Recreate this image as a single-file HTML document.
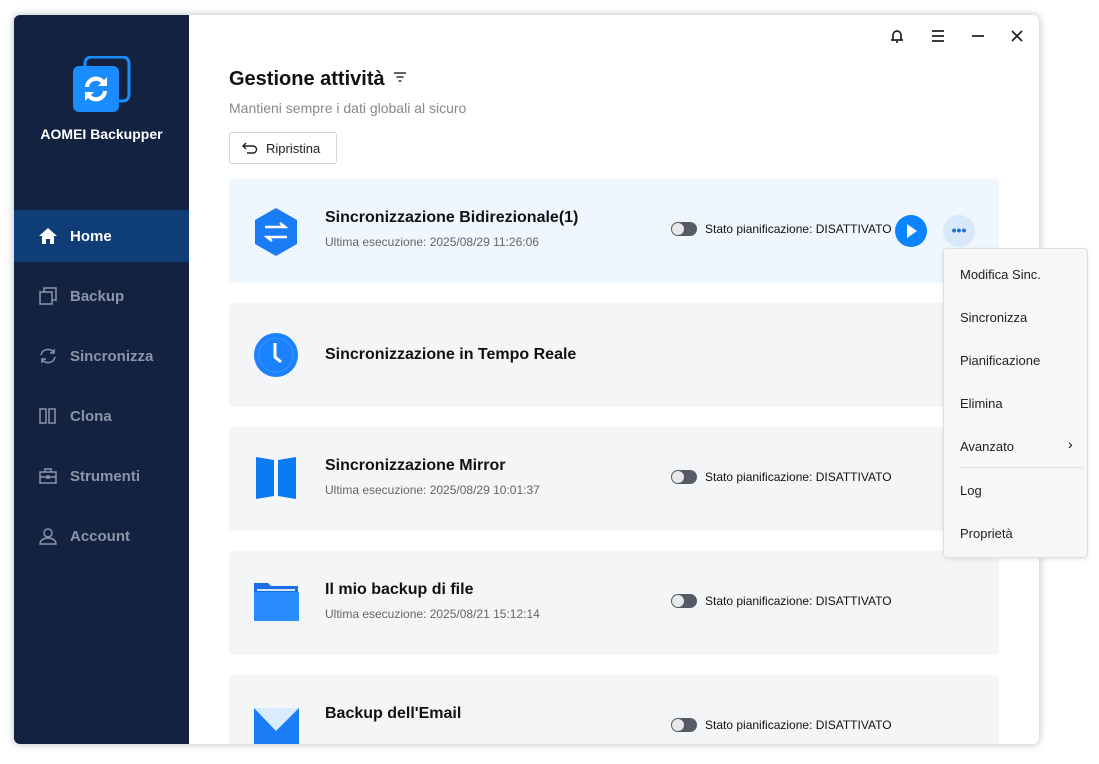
<!DOCTYPE html>
<html><head><meta charset="utf-8"><style>
*{margin:0;padding:0;box-sizing:border-box}
body{width:1099px;height:764px;background:#fff;font-family:"Liberation Sans",sans-serif;position:relative;overflow:hidden}
.win{position:absolute;left:14px;top:15px;width:1025px;height:729px;background:#fff;border-radius:6px;overflow:hidden;box-shadow:0 0 8px rgba(90,100,130,.45)}
.side{position:absolute;left:0;top:0;width:175px;height:729px;background:#142242}
.logo{position:absolute;left:58px;top:41px}
.brand{position:absolute;left:0;width:175px;top:111px;text-align:center;color:#fff;font-weight:bold;font-size:14px}
.nav{position:absolute;left:0;width:175px;height:52px;display:flex;align-items:center;color:#8b94a8;font-size:15px;font-weight:bold}
.nav svg{margin-left:24px;margin-right:12px}
.nav.act{background:#0f3d78;color:#fff}
.main{position:absolute;left:175px;top:0;right:0;bottom:0}
h1{position:absolute;left:40px;top:53px;font-size:20px;font-weight:bold;color:#111}
.sub{position:absolute;left:40px;top:85px;font-size:14px;color:#888}
.btn{position:absolute;left:40px;top:117px;width:108px;height:32px;border:1px solid #d4d6da;border-radius:3px;font-size:13px;color:#222;display:flex;align-items:center;padding-left:12px}
.card{position:absolute;left:40px;width:770px;height:104px;background:#f4f5f7;border-radius:4px}
.card.sel{background:#eff6fd}
.ic{position:absolute;left:24px;top:28px}
.t{position:absolute;left:96px;top:30px;font-size:16px;font-weight:bold;color:#111}
.d{position:absolute;left:96px;top:56px;font-size:12px;color:#666}
.st{position:absolute;left:442px;top:43px;font-size:12px;color:#111;display:flex;align-items:center}
.tg{width:26px;height:14px;border-radius:7px;background:#555b66;position:relative;margin-right:8px}
.tg:after{content:"";position:absolute;left:1px;top:1px;width:12px;height:12px;border-radius:6px;background:#e8e8ea}
.menu{position:absolute;left:943px;top:248px;width:145px;height:310px;background:#f6f7f9;border:1px solid #dcdee2;border-radius:4px;box-shadow:0 2px 6px rgba(0,0,0,.08)}
.mi{position:absolute;left:16px;font-size:13px;color:#222}
</style></head><body>
<div class="win">
<div class="side">
<svg class="logo" width="60" height="58" viewBox="0 0 60 58"><rect x="13" y="1" width="44" height="44" rx="6" fill="none" stroke="#1a8cff" stroke-width="3"/><rect x="1" y="10" width="46" height="46" rx="6" fill="#1a8cff"/><path d="M13 31a11 11 0 0 1 19-7l3-3v9h-9l3-3a7 7 0 0 0-12 4z" fill="#fff"/><path d="M35 35a11 11 0 0 1-19 7l-3 3v-9h9l-3 3a7 7 0 0 0 12-4z" fill="#fff"/></svg>
<div class="brand">AOMEI Backupper</div>
<div class="nav act" style="top:195px"><svg width="20" height="18" viewBox="0 0 20 18"><path d="M10 1 1 9h3v8h4v-5h4v5h4V9h3z" fill="#fff"/></svg>Home</div>
<div class="nav" style="top:255px"><svg width="20" height="18" viewBox="0 0 20 18" fill="none" stroke="#8b94a8" stroke-width="1.5"><rect x="2" y="5" width="12" height="12"/><path d="M6 5V1h12v12h-4"/></svg>Backup</div>
<div class="nav" style="top:315px"><svg width="20" height="18" viewBox="0 0 20 18" fill="none" stroke="#8b94a8" stroke-width="1.5"><path d="M3 8a7 7 0 0 1 13-2M17 10a7 7 0 0 1-13 2"/><path d="M16 2v4h-4M4 16v-4h4"/></svg>Sincronizza</div>
<div class="nav" style="top:375px"><svg width="20" height="18" viewBox="0 0 20 18" fill="none" stroke="#8b94a8" stroke-width="1.5"><rect x="2" y="2" width="6" height="14"/><rect x="11" y="2" width="6" height="14"/></svg>Clona</div>
<div class="nav" style="top:435px"><svg width="20" height="18" viewBox="0 0 20 18" fill="none" stroke="#8b94a8" stroke-width="1.5"><rect x="2" y="5" width="16" height="11"/><path d="M7 5V2h6v3M2 10h16"/><rect x="9" y="9" width="2" height="2"/></svg>Strumenti</div>
<div class="nav" style="top:495px"><svg width="20" height="18" viewBox="0 0 20 18" fill="none" stroke="#8b94a8" stroke-width="1.5"><circle cx="10" cy="6" r="4"/><path d="M2 17c0-4 4-6 8-6s8 2 8 6z"/></svg>Account</div>
</div>
<div class="main">
<svg style="position:absolute;left:700px;top:13px" width="140" height="16" viewBox="0 0 140 16" fill="none" stroke="#222" stroke-width="1.7"><path d="M4 12V7a4 4 0 0 1 8 0v5zM2 12h12M7 14h2"/><path d="M43 3h12M43 8h12M43 13h12"/><path d="M83 8h12"/><path d="M123 3l10 10M133 3l-10 10"/></svg>
<h1>Gestione attività</h1>
<svg style="position:absolute;left:205px;top:57px" width="12" height="10" viewBox="0 0 12 10" fill="none" stroke="#333" stroke-width="1.4"><path d="M0 1h12M2.5 5h7M4.5 9h3"/></svg>
<div class="sub">Mantieni sempre i dati globali al sicuro</div>
<div class="btn"><svg width="16" height="12" viewBox="0 0 16 12" fill="none" stroke="#222" stroke-width="1.4" style="margin-right:8px"><path d="M4 1 1 4l3 3M1 4h10a3.5 3.5 0 0 1 0 7H5"/></svg>Ripristina</div>

<div class="card sel" style="top:164px">
<svg class="ic" width="46" height="50" viewBox="0 0 46 50"><path d="M23 1 44 13v24L23 49 2 37V13z" fill="#1a7cf5"/><path d="M12 20h20l-5-4M34 30H14l5 4" fill="none" stroke="#fff" stroke-width="2.5"/></svg>
<div class="t">Sincronizzazione Bidirezionale(1)</div><div class="d">Ultima esecuzione: 2025/08/29 11:26:06</div>
<div class="st"><div class="tg"></div>Stato pianificazione: DISATTIVATO</div>
<div style="position:absolute;left:666px;top:36px;width:32px;height:32px;border-radius:16px;background:#0a84ff"><svg width="32" height="32"><path d="M12 9l10 7-10 7z" fill="#fff"/></svg></div>
<div style="position:absolute;left:714px;top:36px;width:32px;height:32px;border-radius:16px;background:#d8e8f8;color:#1a6fe0;font-size:14px;text-align:center;line-height:30px;font-weight:bold">•••</div>
</div>
<div class="card" style="top:288px">
<svg class="ic" width="46" height="48" viewBox="0 0 46 48"><circle cx="23" cy="24" r="22" fill="#1a82ff"/><circle cx="23" cy="24" r="17" fill="none" stroke="#3a95ff" stroke-width="1"/><path d="M22 12v14l6 5" fill="none" stroke="#fff" stroke-width="3"/></svg>
<div class="t" style="top:43px">Sincronizzazione in Tempo Reale</div></div>
<div class="card" style="top:412px">
<svg class="ic" width="46" height="46" viewBox="0 0 46 46"><path d="M3 2l18 3v36L3 44z M25 5l18-3v42l-18-3z" fill="#0a7af5"/></svg>
<div class="t">Sincronizzazione Mirror</div><div class="d">Ultima esecuzione: 2025/08/29 10:01:37</div>
<div class="st"><div class="tg"></div>Stato pianificazione: DISATTIVATO</div></div>
<div class="card" style="top:536px">
<svg class="ic" width="46" height="46" viewBox="0 0 46 46"><path d="M1 4h14l3 3h27v35H1z" fill="#1a6fe8"/><rect x="4" y="10" width="38" height="2" fill="#cfe4ff"/><rect x="1" y="13" width="45" height="29" fill="#2b8cff"/></svg>
<div class="t">Il mio backup di file</div><div class="d">Ultima esecuzione: 2025/08/21 15:12:14</div>
<div class="st"><div class="tg"></div>Stato pianificazione: DISATTIVATO</div></div>
<div class="card" style="top:660px">
<svg class="ic" width="46" height="46" viewBox="0 0 46 46"><rect x="1" y="5" width="45" height="36" fill="#1a7cf5"/><path d="M1 5h45L23 28z" fill="#d8ebff"/></svg>
<div class="t">Backup dell'Email</div>
<div class="st"><div class="tg"></div>Stato pianificazione: DISATTIVATO</div></div>
</div>
</div>
<div class="menu">
<div class="mi" style="top:18px">Modifica Sinc.</div>
<div class="mi" style="top:61px">Sincronizza</div>
<div class="mi" style="top:104px">Pianificazione</div>
<div class="mi" style="top:147px">Elimina</div>
<div class="mi" style="top:190px">Avanzato</div><div style="position:absolute;left:124px;top:187px;font-size:14px">›</div>
<div style="position:absolute;left:15px;right:4px;top:218px;border-top:1px solid #dcdee2"></div>
<div class="mi" style="top:234px">Log</div>
<div class="mi" style="top:277px">Proprietà</div>
</div>
</body></html>
